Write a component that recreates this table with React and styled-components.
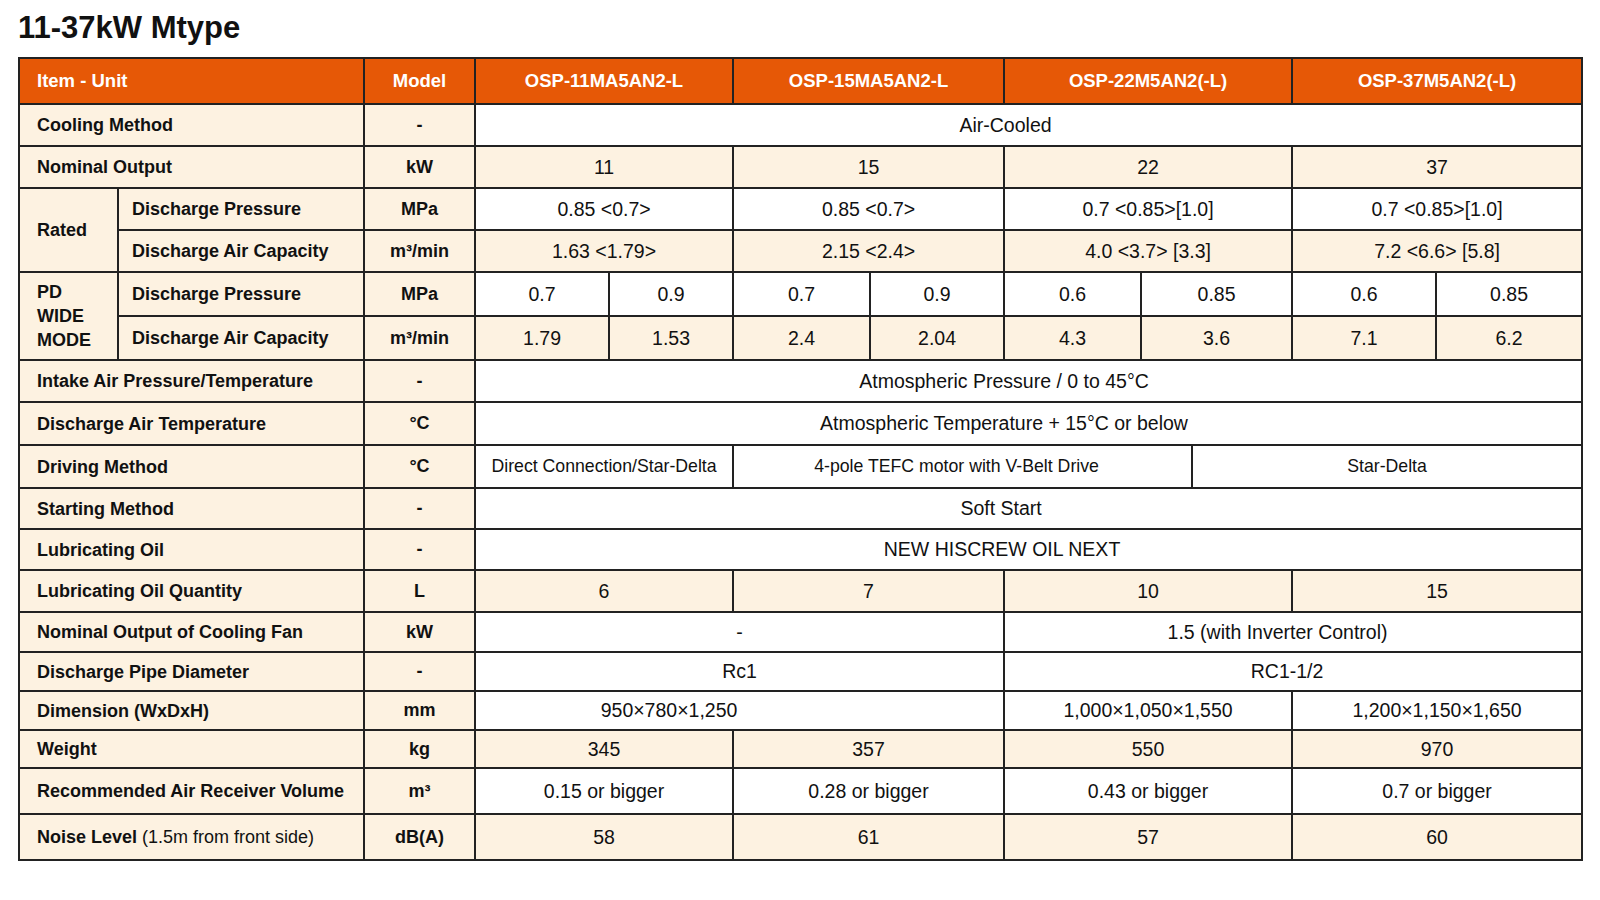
import React from 'react';
import styled, { createGlobalStyle } from 'styled-components';

const GlobalStyle = createGlobalStyle`
  html, body {
    margin: 0;
    padding: 0;
    background: #ffffff;
    font-family: "Liberation Sans", Arial, sans-serif;
    color: #111111;
  }
`;

const Page = styled.div`
  padding: 8px 0 0 18px;
  width: 1600px;
  box-sizing: border-box;
`;

const Title = styled.h1`
  margin: 0 0 10px 0;
  font-size: 31px;
  line-height: 39px;
  font-weight: 700;
  color: #111;
`;

const Table = styled.table`
  border-collapse: collapse;
  table-layout: fixed;
  width: 1563px;
  border: 2px solid #222;
`;

const Row = styled.tr`
  height: ${(p) => p.$h}px;
`;

const HeadCell = styled.th`
  background: #e65806;
  color: #ffffff;
  font-size: 18.5px;
  font-weight: 700;
  text-align: ${(p) => (p.$left ? 'left' : 'center')};
  padding: ${(p) => (p.$left ? '0 0 0 17px' : '0')};
  border: 2px solid #222;
`;

const LabelCell = styled.td`
  background: #fdf2e1;
  font-size: 18px;
  font-weight: 700;
  text-align: left;
  padding: 0 4px 0 ${(p) => (p.$sub ? 13 : 17)}px;
  border: 2px solid #222;
  line-height: 24px;
  white-space: nowrap;
`;

const Note = styled.span`
  font-weight: 400;
`;

const UnitCell = styled.td`
  background: #fdf2e1;
  font-size: 18px;
  font-weight: 700;
  text-align: center;
  border: 2px solid #222;
`;

const ValueCell = styled.td`
  background: ${(p) => (p.$shade ? '#fdf2e1' : '#ffffff')};
  font-size: ${(p) => (p.$small ? 17.7 : 19.5)}px;
  text-align: center;
  padding: 0 ${(p) => p.$offset || 0}px 0 0;
  border: 2px solid #222;
  white-space: nowrap;
`;

const widths = [99, 246, 111, 134, 124, 137, 134, 137, 51, 100, 144, 146];

const Sup = () => <>&sup3;</>;

export default function App() {
  return (
    <>
      <GlobalStyle />
      <Page>
        <Title>11-37kW Mtype</Title>
        <Table>
          <colgroup>
            {widths.map((w, i) => (
              <col key={i} style={{ width: w }} />
            ))}
          </colgroup>
          <thead>
            <Row $h={46}>
              <HeadCell colSpan={2} $left>Item - Unit</HeadCell>
              <HeadCell>Model</HeadCell>
              <HeadCell colSpan={2}>OSP-11MA5AN2-L</HeadCell>
              <HeadCell colSpan={2}>OSP-15MA5AN2-L</HeadCell>
              <HeadCell colSpan={3}>OSP-22M5AN2(-L)</HeadCell>
              <HeadCell colSpan={2}>OSP-37M5AN2(-L)</HeadCell>
            </Row>
          </thead>
          <tbody>
            <Row $h={42}>
              <LabelCell colSpan={2}>Cooling Method</LabelCell>
              <UnitCell>-</UnitCell>
              <ValueCell colSpan={9} $offset={46}>Air-Cooled</ValueCell>
            </Row>
            <Row $h={42}>
              <LabelCell colSpan={2}>Nominal Output</LabelCell>
              <UnitCell>kW</UnitCell>
              <ValueCell colSpan={2} $shade>11</ValueCell>
              <ValueCell colSpan={2} $shade>15</ValueCell>
              <ValueCell colSpan={3} $shade>22</ValueCell>
              <ValueCell colSpan={2} $shade>37</ValueCell>
            </Row>
            <Row $h={42}>
              <LabelCell rowSpan={2}>Rated</LabelCell>
              <LabelCell $sub>Discharge Pressure</LabelCell>
              <UnitCell>MPa</UnitCell>
              <ValueCell colSpan={2}>0.85 &lt;0.7&gt;</ValueCell>
              <ValueCell colSpan={2}>0.85 &lt;0.7&gt;</ValueCell>
              <ValueCell colSpan={3}>0.7 &lt;0.85&gt;[1.0]</ValueCell>
              <ValueCell colSpan={2}>0.7 &lt;0.85&gt;[1.0]</ValueCell>
            </Row>
            <Row $h={42}>
              <LabelCell $sub>Discharge Air Capacity</LabelCell>
              <UnitCell>m<Sup />/min</UnitCell>
              <ValueCell colSpan={2} $shade>1.63 &lt;1.79&gt;</ValueCell>
              <ValueCell colSpan={2} $shade>2.15 &lt;2.4&gt;</ValueCell>
              <ValueCell colSpan={3} $shade>4.0 &lt;3.7&gt; [3.3]</ValueCell>
              <ValueCell colSpan={2} $shade>7.2 &lt;6.6&gt; [5.8]</ValueCell>
            </Row>
            <Row $h={44}>
              <LabelCell rowSpan={2}>PD<br />WIDE<br />MODE</LabelCell>
              <LabelCell $sub>Discharge Pressure</LabelCell>
              <UnitCell>MPa</UnitCell>
              <ValueCell>0.7</ValueCell>
              <ValueCell>0.9</ValueCell>
              <ValueCell>0.7</ValueCell>
              <ValueCell>0.9</ValueCell>
              <ValueCell>0.6</ValueCell>
              <ValueCell colSpan={2}>0.85</ValueCell>
              <ValueCell>0.6</ValueCell>
              <ValueCell>0.85</ValueCell>
            </Row>
            <Row $h={44}>
              <LabelCell $sub>Discharge Air Capacity</LabelCell>
              <UnitCell>m<Sup />/min</UnitCell>
              <ValueCell $shade>1.79</ValueCell>
              <ValueCell $shade>1.53</ValueCell>
              <ValueCell $shade>2.4</ValueCell>
              <ValueCell $shade>2.04</ValueCell>
              <ValueCell $shade>4.3</ValueCell>
              <ValueCell colSpan={2} $shade>3.6</ValueCell>
              <ValueCell $shade>7.1</ValueCell>
              <ValueCell $shade>6.2</ValueCell>
            </Row>
            <Row $h={42}>
              <LabelCell colSpan={2}>Intake Air Pressure/Temperature</LabelCell>
              <UnitCell>-</UnitCell>
              <ValueCell colSpan={9} $offset={49}>Atmospheric Pressure / 0 to 45°C</ValueCell>
            </Row>
            <Row $h={43}>
              <LabelCell colSpan={2}>Discharge Air Temperature</LabelCell>
              <UnitCell>°C</UnitCell>
              <ValueCell colSpan={9} $offset={49}>Atmospheric Temperature + 15°C or below</ValueCell>
            </Row>
            <Row $h={43}>
              <LabelCell colSpan={2}>Driving Method</LabelCell>
              <UnitCell>°C</UnitCell>
              <ValueCell colSpan={2} $small>Direct Connection/Star-Delta</ValueCell>
              <ValueCell colSpan={4} $small $offset={12}>4-pole TEFC motor with V-Belt Drive</ValueCell>
              <ValueCell colSpan={3} $small>Star-Delta</ValueCell>
            </Row>
            <Row $h={41}>
              <LabelCell colSpan={2}>Starting Method</LabelCell>
              <UnitCell>-</UnitCell>
              <ValueCell colSpan={9} $offset={55}>Soft Start</ValueCell>
            </Row>
            <Row $h={41}>
              <LabelCell colSpan={2}>Lubricating Oil</LabelCell>
              <UnitCell>-</UnitCell>
              <ValueCell colSpan={9} $offset={53}>NEW HISCREW OIL NEXT</ValueCell>
            </Row>
            <Row $h={42}>
              <LabelCell colSpan={2}>Lubricating Oil Quantity</LabelCell>
              <UnitCell>L</UnitCell>
              <ValueCell colSpan={2} $shade>6</ValueCell>
              <ValueCell colSpan={2} $shade>7</ValueCell>
              <ValueCell colSpan={3} $shade>10</ValueCell>
              <ValueCell colSpan={2} $shade>15</ValueCell>
            </Row>
            <Row $h={40}>
              <LabelCell colSpan={2}>Nominal Output of Cooling Fan</LabelCell>
              <UnitCell>kW</UnitCell>
              <ValueCell colSpan={4}>-</ValueCell>
              <ValueCell colSpan={5} $offset={31}>1.5 (with Inverter Control)</ValueCell>
            </Row>
            <Row $h={39}>
              <LabelCell colSpan={2}>Discharge Pipe Diameter</LabelCell>
              <UnitCell>-</UnitCell>
              <ValueCell colSpan={4}>Rc1</ValueCell>
              <ValueCell colSpan={5} $offset={12}>RC1-1/2</ValueCell>
            </Row>
            <Row $h={39}>
              <LabelCell colSpan={2}>Dimension (WxDxH)</LabelCell>
              <UnitCell>mm</UnitCell>
              <ValueCell colSpan={4} $offset={141}>950×780×1,250</ValueCell>
              <ValueCell colSpan={3}>1,000×1,050×1,550</ValueCell>
              <ValueCell colSpan={2}>1,200×1,150×1,650</ValueCell>
            </Row>
            <Row $h={38}>
              <LabelCell colSpan={2}>Weight</LabelCell>
              <UnitCell>kg</UnitCell>
              <ValueCell colSpan={2} $shade>345</ValueCell>
              <ValueCell colSpan={2} $shade>357</ValueCell>
              <ValueCell colSpan={3} $shade>550</ValueCell>
              <ValueCell colSpan={2} $shade>970</ValueCell>
            </Row>
            <Row $h={46}>
              <LabelCell colSpan={2}>Recommended Air Receiver Volume</LabelCell>
              <UnitCell>m<Sup /></UnitCell>
              <ValueCell colSpan={2}>0.15 or bigger</ValueCell>
              <ValueCell colSpan={2}>0.28 or bigger</ValueCell>
              <ValueCell colSpan={3}>0.43 or bigger</ValueCell>
              <ValueCell colSpan={2}>0.7 or bigger</ValueCell>
            </Row>
            <Row $h={46}>
              <LabelCell colSpan={2}>
                Noise Level <Note>(1.5m from front side)</Note>
              </LabelCell>
              <UnitCell>dB(A)</UnitCell>
              <ValueCell colSpan={2} $shade>58</ValueCell>
              <ValueCell colSpan={2} $shade>61</ValueCell>
              <ValueCell colSpan={3} $shade>57</ValueCell>
              <ValueCell colSpan={2} $shade>60</ValueCell>
            </Row>
          </tbody>
        </Table>
      </Page>
    </>
  );
}
